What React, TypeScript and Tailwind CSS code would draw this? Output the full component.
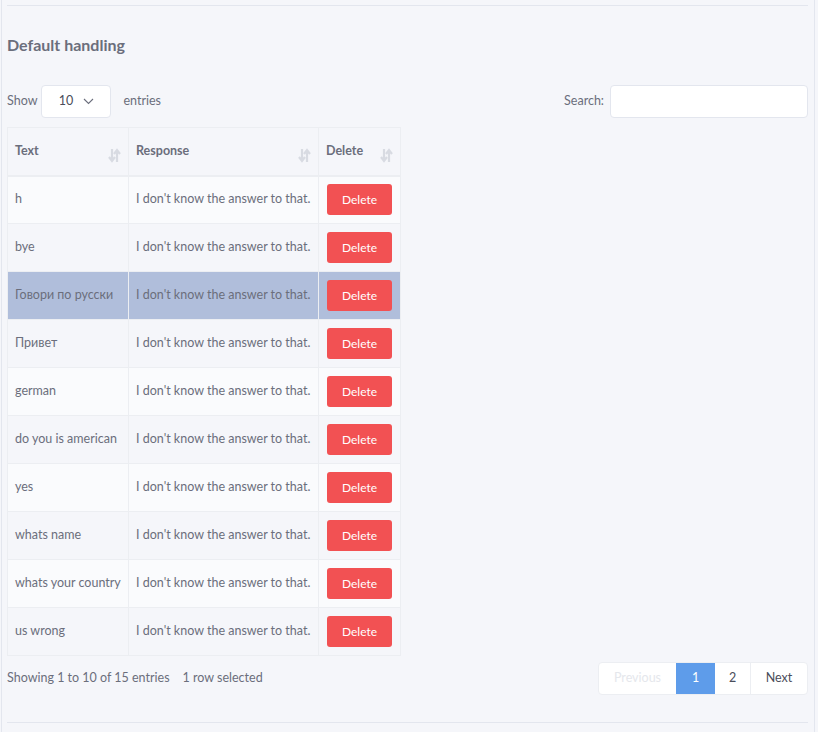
import React from 'react';

const rows = [
  'h',
  'bye',
  'Говори по русски',
  'Привет',
  'german',
  'do you is american',
  'yes',
  'whats name',
  'whats your country',
  'us wrong',
];

const SortIcon = () => (
  <svg width="13" height="15" viewBox="0 0 13 15" className="text-[#d8dbe2]">
    <path d="M4 1v11M1 9l3 4 3-4" stroke="currentColor" strokeWidth="2.2" fill="none" />
    <path d="M9 14V3M6 6l3-4 3 4" stroke="currentColor" strokeWidth="2.2" fill="none" />
  </svg>
);

export default function App() {
  const selected = 2;
  return (
    <div
      className="min-h-[732px] w-[818px] bg-[#f5f6fa] text-[12.5px] text-[#6b6e7c]"
      style={{ fontFamily: 'Lato, "Noto Sans", sans-serif' }}
    >
      <div className="ml-[1px] w-[814px] min-h-[732px] border-x border-[#e3e6ee] pl-[5px] pr-[6px]">
        <div className="h-[5px]" />
        <div className="border-t border-[#e3e6ee]" />
        <h2 className="mt-[29px] text-[16px] font-bold text-[#6b6e7c] leading-5">Default handling</h2>

        <div className="mt-[30px] flex items-center justify-between">
          <div className="flex items-center">
            <span>Show</span>
            <div className="ml-[4px] flex h-[33px] w-[70px] items-center justify-center gap-[10px] rounded-[4px] border border-[#e3e6ee] bg-white text-[#4a4d5a]">
              <span>10</span>
              <svg width="11" height="7" viewBox="0 0 11 7">
                <path d="M1 1l4.5 4.5L10 1" stroke="#6b6e7c" strokeWidth="1.1" fill="none" />
              </svg>
            </div>
            <span className="ml-[12px]">entries</span>
          </div>
          <div className="flex items-center">
            <span>Search:</span>
            <input className="ml-[6px] h-[33px] w-[198px] rounded-[4px] border border-[#e3e6ee] bg-white outline-none" />
          </div>
        </div>

        <table className="mt-[9px] w-[393px] table-fixed border-collapse">
          <colgroup>
            <col className="w-[121px]" />
            <col className="w-[190px]" />
            <col className="w-[82px]" />
          </colgroup>
          <thead>
            <tr className="h-[48px] border-b-2 border-[#eceef2] bg-[#f5f6fa] font-bold">
              <th className="border border-[#eceef2] px-[7px] text-left align-middle">
                <div className="flex items-center justify-between">
                  <span>Text</span>
                  <span className="mt-[8px]"><SortIcon /></span>
                </div>
              </th>
              <th className="border border-[#eceef2] px-[7px] text-left">
                <div className="flex items-center justify-between">
                  <span>Response</span>
                  <span className="mt-[8px]"><SortIcon /></span>
                </div>
              </th>
              <th className="border border-[#eceef2] px-[7px] text-left">
                <div className="flex items-center justify-between">
                  <span>Delete</span>
                  <span className="mt-[8px]"><SortIcon /></span>
                </div>
              </th>
            </tr>
          </thead>
          <tbody>
            {rows.map((t, i) => (
              <tr
                key={t}
                className={
                  'h-[48px] ' +
                  (i === selected ? 'bg-[#b0bedb]' : i % 2 === 0 ? 'bg-[#fafbfd]' : 'bg-[#f5f6fa]')
                }
              >
                <td className="border border-[#eceef2] px-[7px] whitespace-nowrap overflow-hidden">{t}</td>
                <td className="border border-[#eceef2] px-[7px] whitespace-nowrap overflow-hidden">I don't know the answer to that.</td>
                <td className="border border-[#eceef2] px-[8px]">
                  <button className="flex h-[31px] w-[65px] items-center justify-center rounded-[3px] bg-[#f25153] text-[12px] text-white">
                    Delete
                  </button>
                </td>
              </tr>
            ))}
          </tbody>
        </table>

        <div className="mt-[6px] flex items-center justify-between">
          <div className="flex items-center gap-[13px]">
            <span>Showing 1 to 10 of 15 entries</span>
            <span>1 row selected</span>
          </div>
          <div className="flex h-[33px] overflow-hidden rounded-[4px] border border-[#eceef2] bg-white">
            <span className="flex w-[77px] items-center justify-center text-[#e5e7ec]">Previous</span>
            <span className="flex w-[39px] items-center justify-center bg-[#5e9cea] text-white">1</span>
            <span className="flex w-[36px] items-center justify-center border-r border-[#eceef2] text-[#4a4d5a]">2</span>
            <span className="flex w-[56px] items-center justify-center text-[#4a4d5a]">Next</span>
          </div>
        </div>

        <div className="mt-[27px] border-t border-[#e3e6ee]" />
      </div>
    </div>
  );
}
